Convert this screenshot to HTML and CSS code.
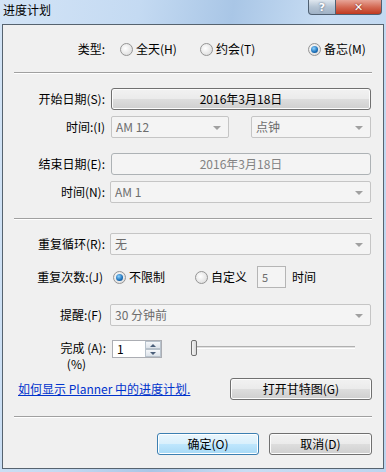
FILE: index.html
```html
<!doctype html>
<html><head><meta charset="utf-8"/>
<link rel="stylesheet" href="styles.css">
<title>进度计划</title>
</head>
<body>
<div class="window">
	<div class="titlebar">
		<span class="title">进度计划</span>
		<div class="caption">
			<span class="btn-help">?</span>
			<span class="btn-close">✕</span>
		</div>
	</div>

	<div class="client">

		<div class="row r-type">
			<span class="lbl">类型:</span>
			<span class="radio-item w-allday"><i class="radio"></i>全天(H)</span>
			<span class="radio-item w-appt"><i class="radio"></i>约会(T)</span>
			<span class="radio-item"><i class="radio on"></i>备忘(M)</span>
		</div>

		<div class="sep s1"></div>

		<div class="row r-start">
			<span class="lbl">开始日期(S):</span>
			<span class="button wide">2016年3月18日</span>
		</div>

		<div class="row r-time1">
			<span class="lbl">时间:(I)</span>
			<span class="combo c-half">AM 12<i class="arrow"></i></span>
			<span class="combo c-half2">点钟<i class="arrow"></i></span>
		</div>

		<div class="row r-end">
			<span class="lbl">结束日期(E):</span>
			<span class="button wide disabled">2016年3月18日</span>
		</div>

		<div class="row r-time2">
			<span class="lbl">时间(N):</span>
			<span class="combo c-full">AM 1<i class="arrow"></i></span>
		</div>

		<div class="sep s2"></div>

		<div class="row r-repeat">
			<span class="lbl">重复循环(R):</span>
			<span class="combo c-full">无<i class="arrow"></i></span>
		</div>

		<div class="row r-count">
			<span class="lbl">重复次数:(J)</span>
			<span class="radio-item w-nolimit"><i class="radio on"></i>不限制</span>
			<span class="radio-item"><i class="radio"></i>自定义</span>
			<span class="numbox">5</span>
			<span class="unit">时间</span>
		</div>

		<div class="row r-remind">
			<span class="lbl">提醒:(F)</span>
			<span class="combo c-full">30 分钟前<i class="arrow"></i></span>
		</div>

		<div class="row r-done">
			<span class="lbl lbl2">完成 (A):<br/><span class="pct">(%)</span></span>
			<span class="spin">1
				<span class="spin-btns"><i class="up"></i><i class="down"></i></span>
			</span>
			<span class="slider"><i class="thumb"></i></span>
		</div>

		<div class="row r-link">
			<a class="help-link" href="#">如何显示 Planner 中的进度计划.</a>
			<span class="button gantt">打开甘特图(G)</span>
		</div>

		<div class="sep s3"></div>

		<div class="row r-ok">
			<span class="button default">确定(O)</span>
			<span class="button cancel">取消(D)</span>
		</div>

	</div>
</div>
</body>
</html>
```

FILE: styles.css
```css
* { box-sizing:border-box; }
body { margin:0; font-family:"Noto Sans CJK SC", "DejaVu Sans", sans-serif; font-size:12px; line-height:16px; color:#000; }
.window { width:386px; height:472px; background:linear-gradient(100deg, #d3e4f6 0%, #c4daf2 30%, #a9c6e6 50%, #c8ddf3 70%, #bcd4ee 100%); padding:0 2px 4px 2px; }

.titlebar { height:24px; position:relative; }
.title { position:absolute; left:1px; top:2px; line-height:16px; }
.caption { position:absolute; right:2px; top:0; display:flex; }
.btn-help, .btn-close { height:15px; border:1px solid #4f6072; border-top:none; display:flex; align-items:center; justify-content:center; color:#fff; font-family:"DejaVu Sans", sans-serif; font-weight:bold; line-height:1; }
.btn-help { width:28px; border-radius:0 0 0 4px; background:linear-gradient(#dfe7ef, #b4c4d4 50%, #9fb1c5); font-size:11px; text-shadow:0 0 2px #40506a; }
.btn-close { width:46px; border-left:none; border-radius:0 0 4px 0; background:linear-gradient(#e7a598, #d46a55 50%, #c0391f); font-size:11px; text-shadow:0 0 2px #6a1a10; }

.client { height:445px; border:1px solid #56636f; background:#f0f0f0; padding-left:11px; }

.row { display:flex; align-items:center; height:22px; }
.lbl { width:91px; text-align:right; margin-right:6px; white-space:nowrap; flex:none; }

.sep { width:358px; height:2px; border-top:1px solid #a0a0a0; border-bottom:1px solid #fff; }

.radio-item { display:flex; align-items:center; white-space:nowrap; }
.radio { width:13px; height:13px; border-radius:50%; border:1px solid #959595; background:radial-gradient(circle at 40% 40%, #fff, #e2e2e2 70%, #cfcfcf); margin-right:3px; display:inline-block; position:relative; flex:none; }
.radio.on::after { content:""; position:absolute; left:2px; top:2px; width:7px; height:7px; border-radius:50%; background:radial-gradient(circle at 40% 35%, #8fd3ff, #1a6fb8 60%, #0b3f78); }

.button { height:22px; border:1px solid #707070; border-radius:3px; background:linear-gradient(#f2f2f2 0%, #ebebeb 48%, #dddddd 52%, #cfcfcf 100%); display:flex; align-items:center; justify-content:center; box-shadow:inset 0 0 0 1px #fcfcfc; }
.button.disabled { border-color:#adb2b5; background:#f4f4f4; color:#838383; box-shadow:none; }
.wide { width:260px; }

.combo { height:22px; border:1px solid #c5c5c5; border-radius:2px; background:#f4f4f4; color:#6d6d6d; padding-left:4px; display:flex; align-items:center; position:relative; }
.arrow { position:absolute; right:7px; top:9px; border-left:4px solid transparent; border-right:4px solid transparent; border-top:4px solid #a0a0a0; }
.c-half { width:118px; }
.c-half2 { width:120px; margin-left:22px; }
.c-full { width:261px; margin-left:-1px; }

.r-type { margin-top:13px; }
.w-allday { margin-left:9px; width:80px; }
.w-appt { width:108px; }
.s1 { margin-top:12px; }
.r-start { margin-top:14px; }
.r-time1 { margin-top:6px; }
.r-end { margin-top:15px; }
.r-time2 { margin-top:6px; }
.s2 { margin-top:15px; }
.r-repeat { margin-top:13px; }

.r-count { margin-top:11px; }
.r-count .lbl { width:89px; margin-right:10px; }
.w-nolimit { width:82px; }
.numbox { margin-left:10px; width:29px; height:22px; border:1px solid #b5b5b5; background:#f4f4f4; color:#6d6d6d; padding-left:4px; padding-top:2px; font-size:11px; }
.unit { margin-left:6px; }

.r-remind { margin-top:16px; }
.r-remind .lbl { width:88px; margin-right:9px; }

.r-done { margin-top:14px; align-items:flex-start; height:32px; }
.lbl2 { line-height:16px; width:92px; margin-right:6px; }
.pct { margin-right:20px; }
.spin { width:50px; height:18px; border:1px solid #abadb3; background:#fff; padding-left:4px; line-height:16px; position:relative; }
.spin-btns { position:absolute; right:0; top:0; width:16px; height:16px; display:flex; flex-direction:column; }
.spin-btns i { flex:1; border:1px solid #b8c2cc; background:linear-gradient(#f5f7fa, #dde3ea); position:relative; }
.spin-btns i::after { content:""; position:absolute; left:4px; border-left:3px solid transparent; border-right:3px solid transparent; }
.spin-btns .up::after { top:2px; border-bottom:3px solid #4b5f7a; }
.spin-btns .down::after { top:2px; border-top:3px solid #4b5f7a; }
.slider { margin-left:29px; margin-top:6px; width:164px; height:3px; border-top:1px solid #b0b0b0; border-bottom:1px solid #fff; background:#e0e0e0; position:relative; }
.thumb { position:absolute; left:0; top:-7px; width:6px; height:16px; border:1px solid #707070; border-radius:2px; background:linear-gradient(90deg, #f5f5f5, #d8d8d8); }

.r-link { margin-top:6px; justify-content:space-between; width:358px; padding-left:4px; }
.help-link { color:#0033cc; text-decoration:underline; }
.gantt { width:142px; }

.s3 { margin-top:16px; }
.r-ok { margin-top:15px; justify-content:flex-end; width:358px; gap:10px; }
.default { width:102px; border-color:#3c7fb1; background:linear-gradient(#eaf6fd 0%, #d9f0fc 48%, #bee6fd 52%, #a7d9f5 100%); box-shadow:inset 0 0 0 1px #fff; }
.cancel { width:103px; }
```
